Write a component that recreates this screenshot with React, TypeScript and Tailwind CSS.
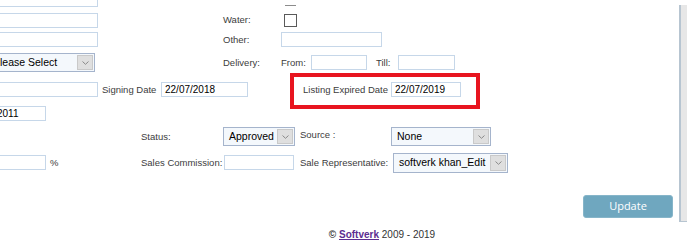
import React from "react";

const label = "shrink-0 text-[9.5px] leading-none text-[#3c3c3c] whitespace-nowrap";

const Input = ({ className = "", value = "" }: { className?: string; value?: string }) => (
  <div
    className={`shrink-0 h-[15px] border border-[#c6d7e9] bg-white flex items-center px-[3px] text-[10px] text-black whitespace-nowrap overflow-hidden ${className}`}
  >
    {value}
  </div>
);

const Chevron = () => (
  <svg width="7" height="4" viewBox="0 0 7 4" fill="none">
    <path d="M0.5 0.5 L3.5 3.3 L6.5 0.5" stroke="#8a8a8a" strokeWidth="1" />
  </svg>
);

const Select = ({ className = "", value }: { className?: string; value: string }) => (
  <div className={`shrink-0 flex border border-[#a5b4cc] bg-[#f4f8fc] ${className}`}>
    <div className="flex-1 flex items-center pl-[5px] text-[10.5px] text-black whitespace-nowrap overflow-hidden">
      {value}
    </div>
    <div className="w-[16px] m-px bg-[#dfdfdf] border border-[#c9c9c9] flex items-center justify-center">
      <Chevron />
    </div>
  </div>
);

const Checkbox = () => <div className="shrink-0 w-[13px] h-[13px] border-[1.5px] border-[#5a5a5a] bg-white" />;

export default function App() {
  return (
    <div className="w-[687px] h-[244px] overflow-hidden bg-white flex flex-col font-['Liberation_Sans',Arial,sans-serif]">
      <div className="flex h-[222px] shrink-0">
        <div className="relative flex-1 overflow-hidden">
          <div className="flex flex-col mt-[-11px]">
            {/* row 0 */}
            <div className="flex items-center h-[20px]">
              <Input className="ml-[-20px] w-[118px]" />
              <div className="ml-[187px] mt-[12px] w-[11px] h-px bg-[#8c8c8c]" />
            </div>
            {/* water */}
            <div className="flex items-center h-[22px]">
              <Input className="ml-[-20px] w-[118px]" />
              <span className={`${label} ml-[125px] w-[61px]`}>Water:</span>
              <Checkbox />
            </div>
            {/* other */}
            <div className="flex items-center h-[17px]">
              <Input className="ml-[-20px] w-[118px]" />
              <span className={`${label} ml-[125px] w-[58px]`}>Other:</span>
              <Input className="w-[101px]" />
            </div>
            {/* delivery */}
            <div className="flex items-center h-[29px]">
              <Select className="ml-[-13px] w-[108px] h-[19px]" value="Please Select" />
              <span className={`${label} ml-[128px] w-[58px]`}>Delivery:</span>
              <span className={`${label} w-[30px]`}>From:</span>
              <Input className="w-[56px]" />
              <span className={`${label} ml-[9px] w-[22px]`}>Till:</span>
              <Input className="w-[57px]" />
            </div>
            {/* dates */}
            <div className="flex items-center h-[25px]">
              <Input className="ml-[-20px] w-[118px]" />
              <span className={`${label} ml-[4px] w-[59px]`}>Signing Date</span>
              <Input className="w-[87px]" value="22/07/2018" />
              <span className={`${label} ml-[55px] w-[88px]`}>Listing Expired Date</span>
              <Input className="w-[70px]" value="22/07/2019" />
            </div>
            {/* year */}
            <div className="flex items-center h-[23px]">
              <Input className="ml-[-6px] w-[52px] !px-[2px]" value="2011" />
            </div>
            {/* status */}
            <div className="flex items-center h-[23px]">
              <span className={`${label} ml-[141px] w-[82px]`}>Status:</span>
              <Select className="w-[72px] h-[19px]" value="Approved" />
              <span className={`${label} ml-[5px] w-[91px] self-start mt-[5px]`}>Source :</span>
              <Select className="w-[100px] h-[19px]" value="None" />
            </div>
            {/* commission */}
            <div className="flex items-center h-[29px]">
              <Input className="ml-[-6px] w-[52px]" />
              <span className={`${label} ml-[4px] w-[91px]`}>%</span>
              <span className={`${label} w-[83px]`}>Sales Commission:</span>
              <Input className="w-[70px]" />
              <span className={`${label} ml-[6px] w-[93px]`}>Sale Representative:</span>
              <Select className="w-[115px] h-[20px]" value="softverk khan_Edit" />
            </div>
            <div className="flex justify-end pr-[6px] mt-[18px]">
              <button className="w-[90px] h-[23px] rounded-[3px] bg-[#6fa7bf] border border-[#86b5c9] text-white text-[11px] font-['Open_Sans',sans-serif]">
                Update
              </button>
            </div>
          </div>
          {/* highlight annotation */}
          <div className="absolute left-[290px] top-[73px] w-[190px] h-[36px] border-[4px] border-[#e8151f]" />
        </div>
        <div className="w-[8px] mt-[5px] h-[217px] bg-[#e7e7e7] border-l-2 border-b border-[#b7c5d1]" />
      </div>
      <div className="pl-[77px] pt-[5px] text-center text-[10px] text-[#333]">
        <span className="font-bold">©</span>{" "}
        <a className="font-bold text-[#5c2e91] underline">Softverk</a> 2009 - 2019
      </div>
    </div>
  );
}
